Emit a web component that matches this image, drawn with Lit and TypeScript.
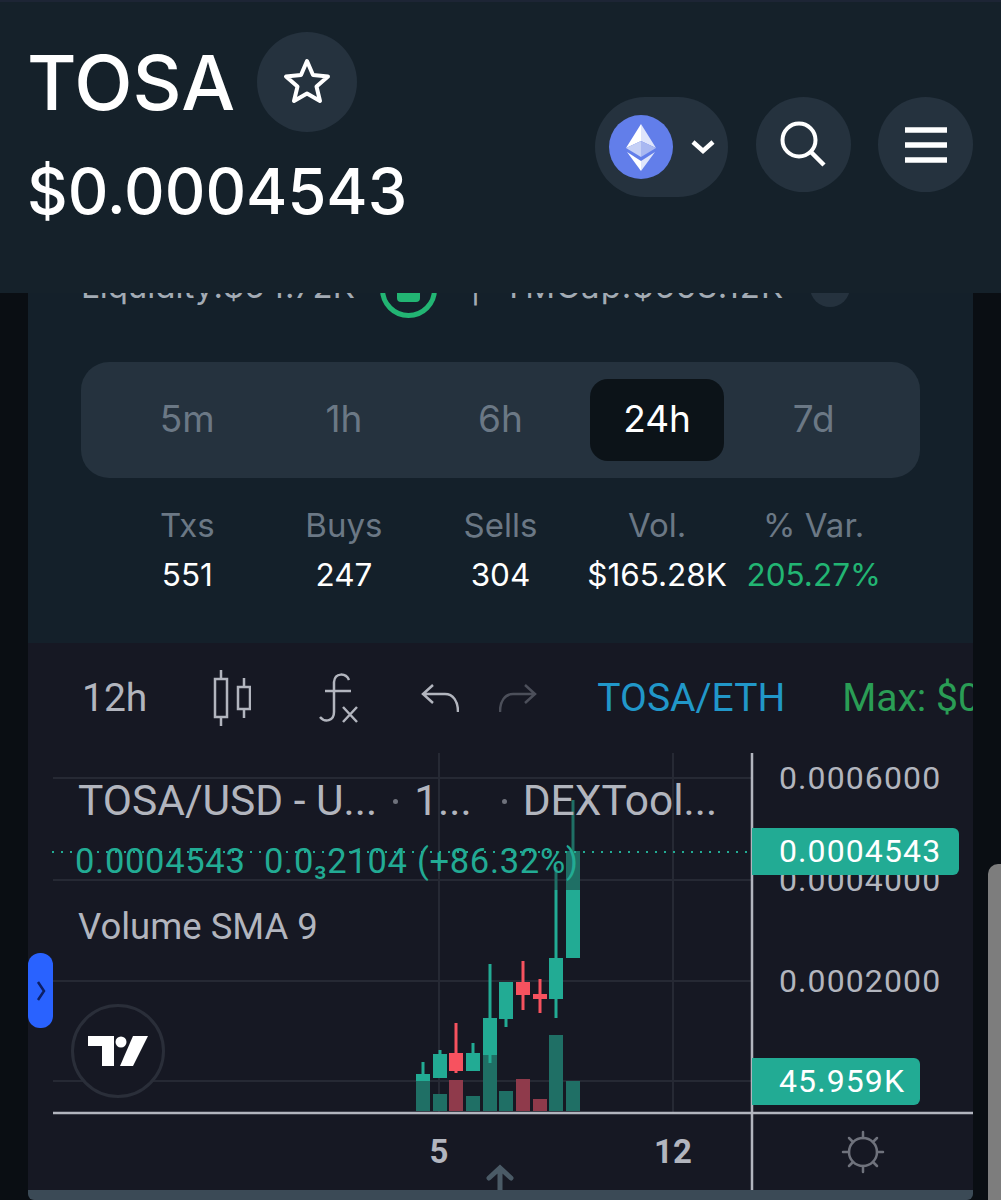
import { LitElement, html, css, svg } from 'lit';
import { customElement } from 'lit/decorators.js';

// [center x, wick top, wick bottom, body top, body bottom, volume top, rising]
const CANDLES: [number, number, number, number, number, number, boolean][] = [
  [423, 1062, 1080, 1074, 1081, 1081, true],
  [440, 1050, 1078, 1054, 1078, 1094, true],
  [456, 1023, 1073, 1053, 1071, 1080, false],
  [473, 1043, 1071, 1053, 1071, 1096, true],
  [490, 964, 1063, 1018, 1055, 1055, true],
  [506, 982, 1027, 982, 1019, 1091, true],
  [523, 961, 1010, 982, 995, 1079, false],
  [540, 979, 1013, 994, 999, 1099, false],
  [556, 890, 1018, 958, 999, 1035, true],
  [573, 890, 958, 890, 958, 1081, true],
];

const PERIODS = ['5m', '1h', '6h', '24h', '7d'];
const STATS = [
  ['Txs', '551'],
  ['Buys', '247'],
  ['Sells', '304'],
  ['Vol.', '$165.28K'],
  ['% Var.', '205.27%'],
];

@customElement('app-root')
export class AppRoot extends LitElement {
  static override styles = css`
    :host {
      display: block;
      position: relative;
      width: 1001px;
      height: 1200px;
      overflow: hidden;
      background: #0a0e13;
      font-family: Inter, 'Noto Sans', sans-serif;
    }

    .header {
      position: relative;
      z-index: 2;
      box-sizing: border-box;
      height: 293px;
      border-top: 2px solid #1d2535;
      padding: 30px 28px 0 27px;
      background: #15212a;
      display: flex;
      justify-content: space-between;
    }
    .title-row {
      display: flex;
      align-items: center;
      gap: 22px;
    }
    .title {
      font-size: 76px;
      line-height: 100px;
      font-weight: 500;
      color: #fff;
    }
    .price {
      font-size: 63px;
      line-height: 70px;
      margin-top: 24px;
      font-weight: 500;
      color: #fff;
    }
    .round {
      background: #25323e;
      border-radius: 50%;
      display: flex;
      align-items: center;
      justify-content: center;
      flex: none;
    }
    .star {
      width: 100px;
      height: 100px;
    }
    .actions {
      display: flex;
      gap: 27px;
      align-items: flex-start;
      padding-top: 65px;
    }
    .actions .round {
      width: 95px;
      height: 95px;
    }
    .chain {
      width: 133px;
      height: 100px;
      margin-right: 1px;
      border-radius: 50px;
      background: #25323e;
      display: flex;
      align-items: center;
      padding-left: 14px;
      box-sizing: border-box;
      gap: 17px;
    }

    .card {
      margin: -33px 28px 0;
      height: 383px;
      background: #14202a;
      box-sizing: border-box;
      padding: 0 53px;
    }
    .metrics {
      height: 44px;
      display: flex;
      align-items: flex-end;
      font-size: 33px;
      line-height: 36px;
      color: #a3abb4;
      white-space: nowrap;
    }
    .metrics .ring {
      width: 57px;
      height: 57px;
      margin: 0 33px -14px 25px;
      border: 5px solid #22b573;
      border-radius: 50%;
      box-sizing: border-box;
      flex: none;
      display: flex;
      align-items: center;
      justify-content: center;
    }
    .metrics .ring span {
      width: 23px;
      height: 25px;
      border-radius: 4px;
      background: #22b573;
    }
    .metrics .sep {
      margin-right: 22px;
    }
    .metrics .cap {
      letter-spacing: 1px;
    }
    .metrics .dot {
      width: 40px;
      height: 40px;
      border-radius: 50%;
      background: #25323e;
      margin: 0 0 -3px 26px;
      flex: none;
    }
    .tabs {
      margin-top: 58px;
      height: 116px;
      border-radius: 28px;
      background: #25323e;
      padding: 0 28px;
      display: grid;
      grid-template-columns: repeat(5, 1fr);
      align-items: center;
      justify-items: center;
      font-size: 37px;
      color: #6b7885;
    }
    .tabs span {
      width: 134px;
      height: 82px;
      line-height: 80px;
      text-align: center;
      border-radius: 18px;
    }
    .tabs .active {
      background: #0c1318;
      color: #fff;
    }
    .stats {
      margin-top: 22px;
      padding: 0 28px;
      display: grid;
      grid-template-columns: repeat(5, 1fr);
      text-align: center;
      font-size: 31.500px;
      line-height: 50px;
      color: #fff;
      white-space: nowrap;
    }
    .stats .label {
      font-size: 33px;
      color: #6b7885;
    }
    .stats .up {
      color: #22b573;
    }
    .stats > div {
      min-width: 0;
      display: flex;
      flex-direction: column;
      align-items: center;
    }

    .chart {
      position: relative;
      margin: 0 28px;
      height: 547px;
      background: #161823;
      overflow: hidden;
      font-family: Roboto, sans-serif;
      color: #b2b5be;
    }
    .toolbar {
      height: 110px;
      display: flex;
      align-items: center;
      padding-left: 54px;
      font-size: 39px;
      white-space: nowrap;
    }
    .toolbar svg {
      flex: none;
    }
    .tool {
      margin-left: 68px;
    }
    .tool.first {
      margin-left: 66px;
    }
    .tool.undo {
      margin-left: 62px;
    }
    .tool.redo {
      margin-left: 40px;
    }
    .pair {
      color: #2197c9;
      margin-left: 60px;
    }
    .max {
      color: #2a9d55;
      margin-left: 57px;
    }
    .plot {
      position: absolute;
      left: 0;
      top: 0;
    }
    .legend {
      position: absolute;
      left: 50px;
      top: 132px;
      font-size: 42.500px;
      line-height: 52px;
      white-space: nowrap;
    }
    .legend .ticks {
      display: flex;
      align-items: center;
      gap: 16px;
    }
    .legend .sep {
      width: 5px;
      height: 5px;
      border-radius: 50%;
      background: #6f727c;
    }
    .legend .sep.wide {
      margin-left: 14px;
    }
    .legend .ohlc {
      margin: 11px 0 0 -3px;
      font-size: 34.500px;
      line-height: 46px;
      letter-spacing: 0.7px;
      color: #22ab94;
    }
    .legend .vol {
      margin-top: 20px;
      font-size: 36.500px;
      line-height: 46px;
    }
    .axis {
      position: absolute;
      left: 751px;
      font-size: 32px;
      line-height: 40px;
      letter-spacing: 1.100px;
      white-space: nowrap;
    }
    .tag {
      position: absolute;
      left: 724px;
      height: 47px;
      line-height: 47px;
      padding-left: 27px;
      box-sizing: border-box;
      background: #22ab94;
      color: #fff;
      font-size: 32px;
      letter-spacing: 1.100px;
      border-radius: 0 6px 6px 0;
    }
    .date {
      position: absolute;
      top: 489px;
      font-size: 33px;
      line-height: 40px;
      font-weight: 700;
      transform: translateX(-50%);
    }
    .handle {
      position: absolute;
      left: 0;
      top: 310px;
      width: 25px;
      height: 75px;
      border-radius: 12px;
      background: #2962ff;
      display: flex;
      align-items: center;
      justify-content: center;
    }
    .logo {
      position: absolute;
      left: 43px;
      top: 361px;
      width: 94px;
      height: 94px;
      box-sizing: border-box;
      border: 3px solid #2a2e39;
      border-radius: 50%;
      background: #161823;
      display: flex;
      align-items: center;
      justify-content: center;
    }
    .bottom {
      margin: 0 28px;
      height: 10px;
      background: #3b4a56;
      border-radius: 0 0 6px 6px;
    }
    .scroll-thumb {
      position: absolute;
      left: 988px;
      top: 864px;
      width: 13px;
      height: 336px;
      background: #7d7d7d;
      border-radius: 10px 0 0 0;
    }
  `;

  private _plot() {
    const green = '#22ab94';
    const red = '#f7525f';
    return svg`
      <g stroke="#262934" stroke-width="2">
        ${[778, 880, 981, 1081].map(
          (y) => svg`<line x1="25" x2="724" y1=${y - 643} y2=${y - 643} />`,
        )}
        ${[411, 645].map((x) => svg`<line x1=${x} x2=${x} y1="110" y2="470" />`)}
      </g>
      ${CANDLES.map(([x, , , , , v, up]) => {
        const cx = x - 28;
        return svg`<rect x=${cx - 7} y=${v - 643} width="14" height=${1111 - v}
          fill=${up ? '#1f6f65' : '#8f3a4b'} />`;
      })}
      <line x1="528" x2="528" y1="224" y2="247" stroke="#1f6f65" stroke-width="3" />
      <line x1="545" x2="545" y1="157" y2="208" stroke="#1f6f65" stroke-width="3" />
      <rect x="538" y="208" width="14" height="39" fill="#1f6f65" />
      ${CANDLES.map(([x, wt, wb, bt, bb, , up]) => {
        const cx = x - 28;
        const c = up ? green : red;
        return svg`
          <line x1=${cx} x2=${cx} y1=${wt - 643} y2=${wb - 643} stroke=${c} stroke-width="3" />
          <rect x=${cx - 7} y=${bt - 643} width="14" height=${bb - bt} fill=${c} />`;
      })}
      <line x1="24" x2="724" y1="209" y2="209" stroke=${green} stroke-width="2"
        stroke-dasharray="2 7" />
      <line x1="25" x2="945" y1="470" y2="470" stroke="#b2b5be" stroke-width="2.5" />
      <line x1="724" x2="724" y1="110" y2="547" stroke="#b2b5be" stroke-width="2.5" />
      <g transform="translate(835 509)" fill="none" stroke="#6f727c" stroke-width="2.5"
        stroke-linecap="round">
        <circle r="14" />
        <path d="M0 -20V-14M0 14V20M-20 0H-14M14 0H20M-14 -14L-10 -10M10 10L14 14M14 -14L10 -10M-10 10L-14 14" />
      </g>
      <path d="M472 547V527M461 535L472 525L483 535" fill="none" stroke="#4a5a66"
        stroke-width="5" stroke-linecap="round" />`;
  }

  override render() {
    return html`
      <div class="header">
        <div>
          <div class="title-row">
            <div class="title">TOSA</div>
            <div class="round star">
              <svg width="50" height="50" viewBox="0 0 50 50">
                <path
                  d="M25 4L31 18L46 19.500L34.500 29.500L38 44L25 36.500L12 44L15.500 29.500L4 19.500L19 18Z"
                  fill="none"
                  stroke="#fff"
                  stroke-width="4"
                  stroke-linejoin="round"
                />
              </svg>
            </div>
          </div>
          <div class="price">$0.0004543</div>
        </div>
        <div class="actions">
          <div class="chain">
            <svg width="64" height="64" viewBox="0 0 64 64">
              <circle cx="32" cy="32" r="32" fill="#627eea" />
              <path d="M32 9L17 33L32 26Z" fill="#fff" />
              <path d="M32 9L47 33L32 26Z" fill="#dfe5fb" />
              <path d="M32 26L17 33L32 42Z" fill="#c5d0f6" />
              <path d="M32 26L47 33L32 42Z" fill="#a9b8f1" />
              <path d="M18 37L32 56V46Z" fill="#fff" />
              <path d="M46 37L32 56V46Z" fill="#dfe5fb" />
            </svg>
            <svg width="26" height="18" viewBox="0 0 26 18">
              <path d="M3 4L13 13L23 4" fill="none" stroke="#fff" stroke-width="4.500" />
            </svg>
          </div>
          <div class="round">
            <svg width="48" height="48" viewBox="0 0 48 48">
              <circle cx="19" cy="19" r="16.500" fill="none" stroke="#fff" stroke-width="4" />
              <path d="M31 31L44 44" stroke="#fff" stroke-width="4.500" />
            </svg>
          </div>
          <div class="round">
            <svg width="42" height="36" viewBox="0 0 42 36">
              <path d="M0 3H42M0 18H42M0 33H42" stroke="#fff" stroke-width="5.500" />
            </svg>
          </div>
        </div>
      </div>

      <div class="card">
        <div class="metrics">
          <span>Liquidity:$64.72K</span>
          <div class="ring"><span></span></div>
          <span class="sep">|</span>
          <span class="cap">TMCap:$658.12K</span>
          <span class="dot"></span>
        </div>
        <div class="tabs">
          ${PERIODS.map(
            (p) => html`<span class=${p === '24h' ? 'active' : ''}>${p}</span>`,
          )}
        </div>
        <div class="stats">
          ${STATS.map(
            ([label, value]) => html`<div>
              <span class="label">${label}</span>
              <span class=${label === '% Var.' ? 'up' : ''}>${value}</span>
            </div>`,
          )}
        </div>
      </div>

      <div class="chart">
        <svg class="plot" width="945" height="547" viewBox="0 0 945 547">${this._plot()}</svg>
        <div class="toolbar">
          <span>12h</span>
          <svg class="tool first" width="38" height="58" viewBox="0 0 38 58" fill="none"
            stroke="#b2b5be" stroke-width="2.500">
            <path d="M2 10H14V48H2ZM8 1V10M8 48V57M25 18H37V40H25ZM31 9V18M31 40V49" />
          </svg>
          <svg class="tool" width="40" height="52" viewBox="0 0 40 52" fill="none"
            stroke="#b2b5be" stroke-width="2.500">
            <path d="M30 8C27 1 16 0 15 10V40C15 49 6 51 1 45M6 19H32M24 35L38 50M38 35L24 50" />
          </svg>
          <svg class="tool undo" width="38" height="30" viewBox="0 0 38 30" fill="none"
            stroke="#b2b5be" stroke-width="2.500">
            <path d="M12 2L2 11L12 20M2 11H24C32 11 37 18 37 29" />
          </svg>
          <svg class="tool redo" width="38" height="30" viewBox="0 0 38 30" fill="none"
            stroke="#4c4f5a" stroke-width="2.500">
            <path d="M26 2L36 11L26 20M36 11H14C6 11 1 18 1 29" />
          </svg>
          <span class="pair">TOSA/ETH</span>
          <span class="max">Max: $0.0006</span>
        </div>
        <div class="legend">
          <div class="ticks">
            <span>TOSA/USD - U...</span>
            <i class="sep"></i>
            <span>1...</span>
            <i class="sep wide"></i>
            <span>DEXTool...</span>
          </div>
          <div class="ohlc">0.0004543&nbsp; 0.0₃2104 (+86.32%)</div>
          <div class="vol">Volume SMA 9</div>
        </div>
        <div class="axis" style="top:115px">0.0006000</div>
        <div class="axis" style="top:217px">0.0004000</div>
        <div class="axis" style="top:318px">0.0002000</div>
        <div class="tag" style="top:185px;width:207px">0.0004543</div>
        <div class="tag" style="top:415px;width:168px">45.959K</div>
        <div class="date" style="left:411px">5</div>
        <div class="date" style="left:645px">12</div>
        <div class="handle">
          <svg width="10" height="22" viewBox="0 0 10 22">
            <path d="M2 2L8 11L2 20" fill="none" stroke="#0c1f66" stroke-width="2.500" />
          </svg>
        </div>
        <div class="logo">
          <svg width="62" height="32" viewBox="0 0 62 32" fill="#fff">
            <path d="M1 1H27V31H15V11H1Z" />
            <circle cx="34" cy="7" r="5.500" />
            <path d="M46 1H61L46 31H33Z" />
          </svg>
        </div>
      </div>
      <div class="bottom"></div>
      <div class="scroll-thumb"></div>
    `;
  }
}

declare global {
  interface HTMLElementTagNameMap {
    'app-root': AppRoot;
  }
}
